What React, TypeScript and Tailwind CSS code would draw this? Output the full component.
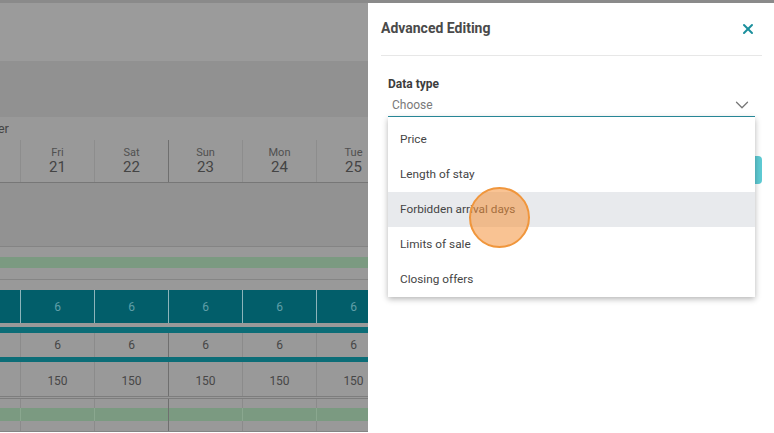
import React from 'react';
import { ChevronDown, X } from 'lucide-react';

const DAYS = [
  { name: 'Fri', date: 21 },
  { name: 'Sat', date: 22 },
  { name: 'Sun', date: 23 },
  { name: 'Mon', date: 24 },
  { name: 'Tue', date: 25 },
];

const OPTIONS = ['Price', 'Length of stay', 'Forbidden arrival days', 'Limits of sale', 'Closing offers'];

type RowProps = {
  className: string;
  line: string;
  strong: string;
  text?: string;
  textClass?: string;
};

function GridRow({ className, line, strong, text, textClass }: RowProps) {
  return (
    <div className={`flex shrink-0 ${className}`}>
      <div className="w-[20px] shrink-0" />
      {DAYS.map((d, i) => (
        <div
          key={d.date}
          className={`w-[74px] shrink-0 border-l flex items-center justify-center ${i === 2 ? strong : line} ${textClass ?? ''}`}
        >
          {text}
        </div>
      ))}
    </div>
  );
}

function Planning() {
  return (
    <div className="w-[368px] shrink-0 flex flex-col overflow-hidden text-[#454545]">
      <div className="h-[58px] bg-[#9b9b9b]" />
      <div className="h-[56px] bg-[#919191]" />
      <div className="h-[23px] bg-[#999999] flex items-center">
        <div className="w-[9px] overflow-hidden flex justify-end whitespace-nowrap text-[13px]">December</div>
      </div>

      {/* day header */}
      <div className="flex h-[43px] bg-[#999999] border-b border-[#777777]">
        <div className="w-[20px] shrink-0" />
        {DAYS.map((d, i) => (
          <div
            key={d.date}
            className={`w-[74px] shrink-0 border-l flex flex-col items-center justify-center ${i === 2 ? 'border-[#6f6f6f]' : 'border-[#8d8d8d]'}`}
          >
            <span className="text-[11px] leading-[13px] text-[#505050]">{d.name}</span>
            <span className="text-[15px] leading-[17px] text-[#444444]">{d.date}</span>
          </div>
        ))}
      </div>

      <div className="h-[64px] bg-[#929292] border-b border-[#848484]" />

      <div className="h-[33px] bg-[#999999] border-b border-[#858585] pt-[10px]">
        <div className="h-[11px] bg-[#7b9a81]" />
      </div>
      <div className="h-[10px] bg-[#999999]" />

      <GridRow
        className="h-[33px] bg-[#025e6a]"
        line="border-[#8db4ba]"
        strong="border-[#8db4ba]"
        text="6"
        textClass="text-[12px] text-[#5f9fa8]"
      />
      <div className="h-[4px] bg-[#999999]" />
      <div className="h-[6px] bg-[#0c6d77]" />
      <GridRow
        className="h-[24px] bg-[#999999]"
        line="border-[#8b8b8b]"
        strong="border-[#6f6f6f]"
        text="6"
        textClass="text-[12px] text-[#474747]"
      />
      <div className="h-[5px] bg-[#0c6d77]" />
      <GridRow
        className="h-[34px] bg-[#999999]"
        line="border-[#8b8b8b]"
        strong="border-[#6f6f6f]"
        text="150"
        textClass="text-[12px] text-[#474747] pt-[3px]"
      />
      <div className="h-[3px] bg-[#999999] border-y border-[#7d7d7d]" />
      <GridRow className="h-[9px] bg-[#999999]" line="border-[#8b8b8b]" strong="border-[#6f6f6f]" />
      <GridRow className="h-[13px] bg-[#7b9a81]" line="border-[#8aa78f]" strong="border-[#6f6f6f]" />
      <GridRow className="h-[11px] bg-[#999999] border-b border-[#858585]" line="border-[#8b8b8b]" strong="border-[#6f6f6f]" />
    </div>
  );
}

function Drawer() {
  return (
    <div className="flex-1 bg-white flex flex-col">
      <div className="h-[53px] ml-[13px] mr-[12px] pb-[1px] flex items-center justify-between border-b border-[#e7e7e7]">
        <span className="text-[14px] font-bold text-[#4a4a4a]">Advanced Editing</span>
        <X size={16} strokeWidth={3} className="mr-[6px] text-[#1a8f9c]" />
      </div>

      <div className="ml-[20px] mr-[19px] mt-[20px]">
        <div className="text-[12px] leading-[16px] font-bold text-[#3d3d3d]">Data type</div>
        <div className="relative">
          <div className="h-[25px] flex items-center justify-between pl-[4px] pr-[2px] pt-[1px] border-b border-[#2a8fa0]">
            <span className="text-[12px] text-[#7a7a7a]">Choose</span>
            <ChevronDown size={22} strokeWidth={1.4} className="text-[#777777]" />
          </div>
          <div className="absolute top-full left-0 right-0 z-10 pt-[5px] bg-white shadow-[0_2px_6px_rgba(0,0,0,0.3)]">
            {OPTIONS.map((o, i) => (
              <div
                key={o}
                className={`h-[35px] flex items-center pl-[12px] text-[11.8px] text-[#454545] ${i === 2 ? 'bg-[#e8eaed]' : ''}`}
              >
                {o}
              </div>
            ))}
          </div>
        </div>
      </div>

      <div className="flex justify-end mr-[12px] mt-[39px]">
        <button className="h-[28px] w-[110px] rounded-[4px] bg-[#5ecbd4] text-white text-[12px]">Apply</button>
      </div>
    </div>
  );
}

export default function App() {
  return (
    <div className="relative w-[774px] h-[433px] overflow-hidden flex flex-col font-['Roboto',sans-serif]">
      <div className="h-[3px] bg-[#8a8a8a] shrink-0" />
      <div className="flex flex-1 min-h-0">
        <Planning />
        <Drawer />
      </div>
      {/* touch indicator */}
      <div className="absolute left-[469px] top-[187px] w-[61px] h-[61px] rounded-full bg-[rgba(244,146,58,0.55)] border-2 border-[#f0963c] z-20" />
    </div>
  );
}
